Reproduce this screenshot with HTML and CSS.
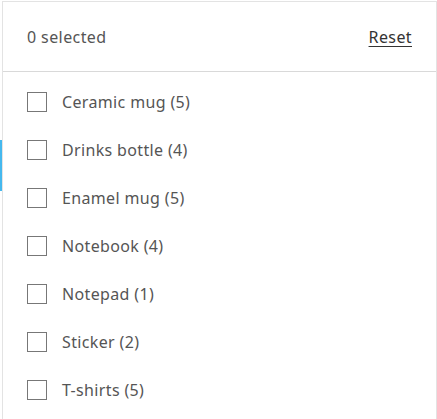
FILE: index.html
```html
<!DOCTYPE html>
<html lang="en">
<head>
    <meta charset="UTF-8">
    <meta name="viewport" content="width=device-width, initial-scale=1.0">
    <title>Filter</title>
    <link rel="stylesheet" href="styles.css">
</head>
<body>
    <div class="edge">
        <div class="edge-mark"></div>
    </div>
    <div class="panel">
        <div class="panel-header">
            <span class="count">0 selected</span>
            <a href="#" class="reset">Reset</a>
        </div>
        <ul class="options">
            <li><label><input type="checkbox"><span class="box"></span>Ceramic mug (5)</label></li>
            <li><label><input type="checkbox"><span class="box"></span>Drinks bottle (4)</label></li>
            <li><label><input type="checkbox"><span class="box"></span>Enamel mug (5)</label></li>
            <li><label><input type="checkbox"><span class="box"></span>Notebook (4)</label></li>
            <li><label><input type="checkbox"><span class="box"></span>Notepad (1)</label></li>
            <li><label><input type="checkbox"><span class="box"></span>Sticker (2)</label></li>
            <li><label><input type="checkbox"><span class="box"></span>T-shirts (5)</label></li>
        </ul>
    </div>
</body>
</html>
```

FILE: styles.css
```css
body {
    font-family: "Noto Sans", sans-serif;
    margin: 0;
    padding: 1px 0 0 0;
    display: flex;
    background-color: #fff;
    color: #555;
    height: 418px;
    overflow: hidden;
}
.edge {
    width: 2px;
    flex-shrink: 0;
}
.edge-mark {
    margin-top: 139px;
    height: 51px;
    background-color: #45b8ee;
}
.panel {
    width: 433px;
    border: 1px solid #e3e3e3;
    border-bottom: none;
}
.panel-header {
    height: 69px;
    padding: 0 24px;
    display: flex;
    justify-content: space-between;
    align-items: center;
    border-bottom: 1px solid #d9d9d9;
    font-size: 16px;
    letter-spacing: 0.4px;
}
.reset {
    color: #333;
    text-decoration: underline;
    text-underline-offset: 3px;
}
.options {
    list-style: none;
    margin: 0;
    padding: 6px 0 0 0;
}
.options li {
    height: 48px;
    padding: 0 24px;
    display: flex;
    align-items: center;
}
.options label {
    display: flex;
    align-items: center;
    gap: 15px;
    font-size: 16px;
    letter-spacing: 0.35px;
    cursor: pointer;
}
.options input {
    display: none;
}
.box {
    width: 18px;
    height: 18px;
    border: 1px solid #777;
}
```
